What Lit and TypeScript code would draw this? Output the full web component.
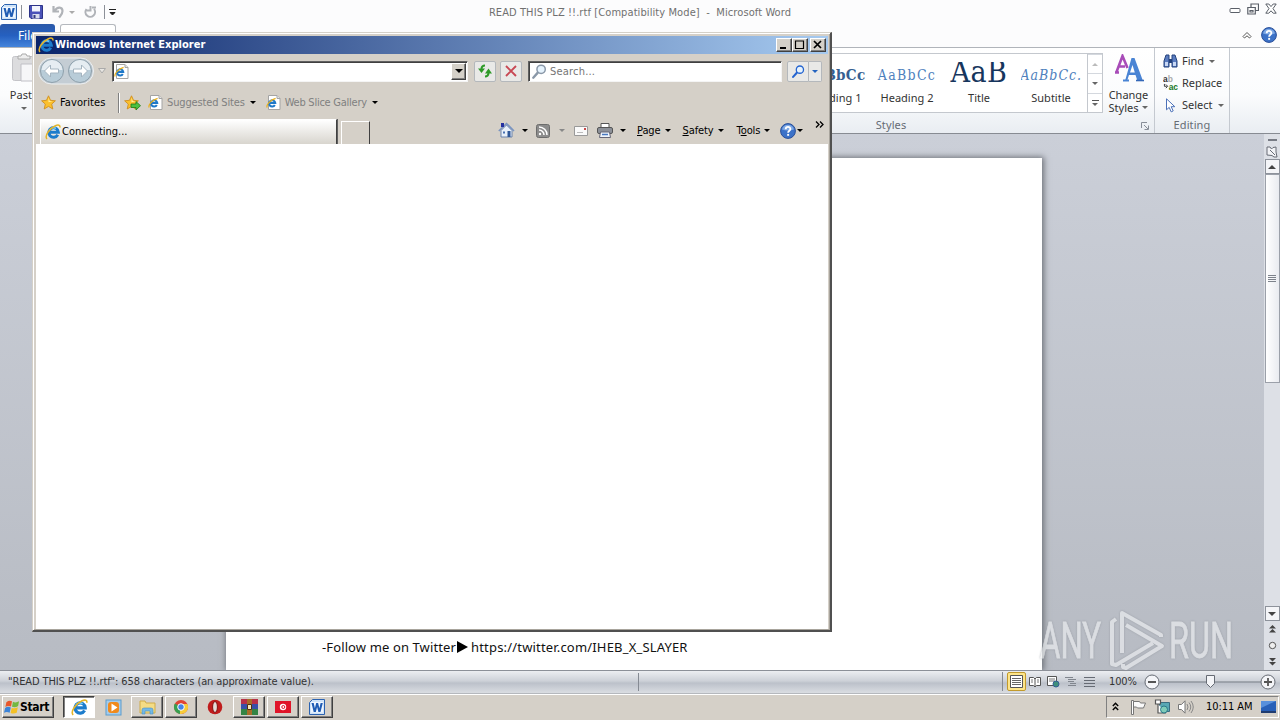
import { LitElement, html, svg, css } from 'lit';
import { customElement } from 'lit/decorators.js';

const ieGlyph = (size: number) => html`
  <svg width=${size} height=${size} viewBox="0 0 16 16">
    <path d="M12.8 10.800a4.800 4.800 0 1 1 .6-2.500H5.400" fill="none" stroke="#1c7ccc" stroke-width="3" />
    <path d="M4.600 6a4.600 4.600 0 0 1 6.400-1.600" fill="none" stroke="#7cd0f8" stroke-width="1.400" />
    <path d="M2 15C-.8 12 4.400 4.400 10.400 1.700c2.800-1.200 5-.6 4.400 1.800" fill="none" stroke="#e4b428" stroke-width="1.500" />
  </svg>`;

const pageGlyph = html`
  <svg width="15" height="15" viewBox="0 0 15 15">
    <path d="M2.5.5h8.500l3 3v11h-11.500z" fill="#fff" stroke="#a4a4a4" />
    <path d="M11 .5v3h3" fill="#e4e4e4" stroke="#a4a4a4" />
    <path d="M8.800 10a3.100 3.100 0 1 1 .4-2H4" fill="none" stroke="#1e78c8" stroke-width="2.100" />
    <path d="M1.200 12.500C0 10.400 3.600 5.200 9.600 3.400" fill="none" stroke="#e8b020" stroke-width="1.200" />
  </svg>`;

const starShape = svg`<path d="M7.500.800l2 4.500 4.900.5-3.700 3.300 1.100 4.900-4.300-2.600L3.200 14l1.100-4.900L.6 5.800l4.900-.5z" fill="#fbc02c" stroke="#d09020" stroke-width=".9"/><path d="M7.500 2.600l1.200 3.300 3 .4-4.200 1z" fill="#fff0a0"/>`;

const wordGlyph = (size: number) => html`
  <svg width=${size} height=${size} viewBox="0 0 16 16">
    <path d="M3.500.5h12v15h-15v-12z" fill="#cfe3f8" stroke="#2b62b0" />
    <rect x="2" y="3" width="12" height="10.500" fill="#f0f7ff" />
    <path d="M2.500 4h2.200l1.200 5.200L7.200 4h1.900l1.300 5.200L11.600 4h2.200l-2.300 9H9.400L8.100 8l-1.300 5H4.700z" fill="#1f5cb4" />
  </svg>`;

const lens = (color: string, size: number) => html`
  <svg width=${size} height=${size} viewBox="0 0 14 14">
    <path d="M1.200 12.800l4-4.500" stroke=${color} stroke-width="2.200" stroke-linecap="round" />
    <circle cx="8.500" cy="5" r="3.900" fill="#e6f3fd" stroke=${color} stroke-width="1.400" />
  </svg>`;

const helpGlyph = html`
  <svg width="16" height="16" viewBox="0 0 16 16">
    <circle cx="8" cy="8" r="7.400" fill="#3c72c8" stroke="#2a4f98" />
    <path d="M2 6.500a6.200 6.200 0 0 1 12 0q-6 2-12 0z" fill="#7ea8e4" />
    <path d="M5.700 6.200c0-3 4.700-3 4.700-.2 0 1.700-2.300 1.800-2.300 3.700" fill="none" stroke="#fff" stroke-width="1.800" />
    <rect x="7.200" y="10.900" width="1.900" height="1.900" fill="#fff" />
  </svg>`;

@customElement('word-window')
export class WordWindow extends LitElement {
  static styles = css`
    :host {
      display: flex;
      flex-direction: column;
      height: 694px;
      font: 11px/14px "Noto Sans", sans-serif;
      color: #333;
    }
    svg { display: block; flex: none; }
    .title-bar {
      display: grid;
      grid-template-columns: 240px 1fr 240px;
      height: 24px;
      align-items: center;
      background: #fcfcfd;
    }
    .quick { display: flex; align-items: center; padding-left: 1px; height: 22px; }
    .bar { width: 1px; height: 14px; background: #8c9098; }
    .bar.first { margin: 0 7px 0 4px; }
    .bar.last { margin: 0 4px 0 8px; }
    .undo { margin-left: 9px; }
    .undo-arrow { margin-left: 4px; }
    .quick .undo-arrow { border-top-color: #aaa; }
    .redo { margin-left: 8px; }
    .title {
      text-align: center;
      font-family: "DejaVu Sans Condensed", "DejaVu Sans", sans-serif;
      font-stretch: condensed;
      color: #707070;
      letter-spacing: .09px;
      padding-top: 1px;
    }
    .controls { display: flex; justify-content: flex-end; gap: 6px; padding: 0 3px 6px 0; }
    .tabs {
      display: flex;
      align-items: flex-start;
      height: 23px;
      background: #fcfcfd;
      border-bottom: 1px solid #b0b4ba;
    }
    .file {
      width: 55px;
      height: 23px;
      border-radius: 3px 3px 0 0;
      background: linear-gradient(#2a58a8, #2560c0 50%, #4585dc);
      color: #fff;
      text-align: center;
      line-height: 24px;
      font-size: 12px;
    }
    .home {
      width: 56px;
      height: 23px;
      margin-left: 5px;
      border: 1px solid #b4b8be;
      border-bottom: 0;
      border-radius: 3px 3px 0 0;
      background: #fff;
      box-sizing: border-box;
    }
    .tab-tools { display: flex; align-items: center; gap: 9px; margin: 3px 3px 0 auto; }
    .ribbon {
      display: flex;
      height: 85px;
      background: linear-gradient(#fff, #fbfcfd 55%, #e9edf2);
      border-bottom: 1px solid #878b92;
    }
    .clipboard { width: 48px; padding-top: 5px; display: flex; flex-direction: column; align-items: center; }
    .clipboard span { margin-top: 6px; font-size: 11px; }
    .clipboard .tri { margin-top: 5px; }
    .group {
      display: flex;
      flex-direction: column;
      box-sizing: border-box;
      border-right: 1px solid #c4c9d0;
    }
    .styles { width: 527px; margin-left: auto; margin-right: 0; }
    .editing { width: 75px; margin-right: 50px; }
    .group-body { display: flex; height: 70px; }
    .group-name {
      display: flex;
      justify-content: center;
      position: relative;
      color: #666c74;
      letter-spacing: .1px;
    }
    .launcher { position: absolute; right: 5px; top: 4px; }
    .gallery {
      display: flex;
      flex: 1;
      justify-content: flex-end;
      height: 58px;
      margin-top: 5px;
      border: 1px solid #c4c8ce;
      background: #fff;
      overflow: hidden;
    }
    .style { width: 72px; text-align: center; overflow: hidden; color: #333; }
    .sample {
      height: 29px;
      line-height: 26px;
      width: 61px;
      margin: 8px auto 0;
      overflow: hidden;
      white-space: nowrap;
      font-family: "DejaVu Serif Condensed", "DejaVu Serif", serif;
      font-stretch: condensed;
      font-size: 14px;
      letter-spacing: 1.300px;
      color: #4f81bd;
    }
    .sample.h1 { font-weight: bold; letter-spacing: .3px; font-size: 15px; color: #365f91; }
    .sample.title-style { font-size: 30px; line-height: 19px; color: #17365d; letter-spacing: .5px; }
    .sample.sub { font-style: italic; letter-spacing: 1px; }
    .scroller { width: 14px; border-left: 1px solid #c4c8ce; display: grid; grid-template-rows: 19px 20px 19px; }
    .scroller div { display: grid; place-content: center; justify-items: center; gap: 2px; border-top: 1px solid #d4d8de; }
    .rule { width: 7px; height: 1px; background: #555; }
    .tri { width: 0; height: 0; border: 3px solid transparent; border-top: 3px solid #666; border-bottom: 0; }
    .tri.up { border-top: 0; border-bottom: 3px solid #bbb; }
    .change { width: 51px; display: flex; flex-direction: column; align-items: center; padding-top: 6px; }
    .change span { display: flex; align-items: center; gap: 4px; line-height: 13px; }
    .change svg { margin-bottom: 6px; }
    .commands { display: flex; flex-direction: column; padding: 2px 0 0 8px; }
    .commands div { display: flex; align-items: center; height: 22px; gap: 4px; white-space: nowrap; }
    .commands .tri { margin-left: 1px; }
    .workspace {
      display: flex;
      flex: 1;
      min-height: 0;
      background: linear-gradient(#cbcfd8, #b7bbc3);
      overflow: hidden;
    }
    .page {
      width: 816px;
      margin: 24px 0 0 226px;
      background: #fff;
      box-shadow: 1px 0 6px 1px #6d7178;
      display: flex;
      align-items: flex-end;
      box-sizing: border-box;
      padding: 0 0 14px 96px;
    }
    .page p { margin: 0; display: flex; align-items: center; font-size: 13px; line-height: 18px; letter-spacing: .12px; color: #111; white-space: nowrap; }
    .page svg { margin: 0 3px 0 0; }
    .page .handle { letter-spacing: .18px; }
    .scroll {
      width: 16px;
      margin-left: auto;
      display: flex;
      flex-direction: column;
      align-items: center;
      background: #dde0e6;
    }
    .split { width: 9px; height: 2px; margin: 5px 0 5px; background: #777b84; }
    .sbtn { width: 13px; height: 13px; margin-top: 2px; border: 1px solid #8d929b; background: #f4f5f8; display: grid; place-content: center; }
    .sbtn .tri { border-width: 4px 4px 0; border-top-color: #444; }
    .sbtn .tri.up { border-width: 0 4px 4px; border-bottom-color: #444; }
    .scroll > .sbtn { margin-top: 1px; }
    .thumb {
      width: 13px;
      height: 207px;
      border: 1px solid #9ba0a9;
      background: linear-gradient(90deg, #fff, #e9ebf0);
      display: grid;
      place-content: center;
      gap: 1px;
    }
    .thumb i { width: 8px; height: 1px; background: #7d828b; }
    .browse { margin-top: auto; }
    .browse .sbtn { margin: 0 0 1px; }
    .browse > svg { margin: 0 auto; }
    .status {
      display: flex;
      align-items: center;
      height: 24px;
      box-sizing: border-box;
      border-top: 1px solid #8c9098;
      border-bottom: 1px solid #b5b8bd;
      background: linear-gradient(#eceef1, #cdd1d8 45%, #bcc1ca 55%, #dadde2);
      font-family: "DejaVu Sans Condensed", "DejaVu Sans", sans-serif;
      font-stretch: condensed;
      letter-spacing: -.11px;
      padding: 0 0 1px 8px;
    }
    .message { width: 630px; }
    .pane { width: 1px; height: 18px; background: #858a93; }
    .views { display: flex; align-items: center; margin-left: 363px; border-left: 1px solid #858a93; padding-left: 4px; }
    .view { padding: 2px; width: 14px; display: grid; place-content: center; }
    .view.on { padding: 2px 1px; width: 15px; border: 1px solid #c29a2c; border-radius: 2px; background: #fde58a; }
    .zoom { margin-left: 11px; width: 35px; }
  `;

  render() {
    return html`
      <div class="title-bar">
        <div class="quick">
          ${wordGlyph(16)}
          <div class="bar first"></div>
          <svg width="14" height="14" viewBox="0 0 14 14">
            <path d="M.5.500h13v13H2l-1.500-1.500z" fill="#4a52b8" stroke="#2c3388" />
            <path d="M3 1h8v5.500H3z" fill="#f2f4fc" /><path d="M3.500 9h7v4.500h-7z" fill="#d8dcec" /><path d="M4.500 10h2v3h-2z" fill="#333a80" />
          </svg>
          <svg class="undo" width="13" height="14" viewBox="0 0 13 14"><path d="M1.500 1v5.500H7M2.500 6c3-5 8-4 8 0 0 3-1.500 4-3.500 6.500" fill="none" stroke="#b0b3b8" stroke-width="2.200" /></svg>
          <div class="tri undo-arrow"></div>
          <svg class="redo" width="13" height="14" viewBox="0 0 13 14"><path d="M3.500 4a4.800 4.800 0 1 0 7.500 0M7.500 1v4.500H3.500M9 2.500h4" fill="none" stroke="#b0b3b8" stroke-width="2" /></svg>
          <div class="bar last"></div>
          <svg width="8" height="8" viewBox="0 0 8 8"><path d="M0 1.500h7M1 4.500h5L3.500 7z" stroke="#222" stroke-width="1" fill="#222" /></svg>
        </div>
        <div class="title">READ THIS PLZ !!.rtf [Compatibility Mode]&nbsp; - &nbsp;Microsoft Word</div>
        <div class="controls">
          <svg width="12" height="12" viewBox="0 0 12 12"><rect x="1" y="5.500" width="10" height="4" rx="1" fill="#fff" stroke="#5a5f68" /></svg>
          <svg width="12" height="12" viewBox="0 0 12 12"><path d="M4 4V1h7.500v6.500H8.500M.8 4.500h7.500v6.500H.8zM3 7.500h3v1.500H3z" fill="none" stroke="#5a5f68" stroke-width="1.200" /></svg>
          <svg width="12" height="12" viewBox="0 0 12 12"><path d="M.8 1h3L6 3.600 8.200 1h3L8 5.600l3.200 4.600h-3L6 7.800l-2.200 2.400h-3L4 5.600z" fill="#fff" stroke="#5a5f68" /></svg>
        </div>
      </div>
      <div class="tabs">
        <div class="file">File</div>
        <div class="home"></div>
        <div class="tab-tools">
          <svg width="10" height="8" viewBox="0 0 10 8"><path d="M1 5.500l4-4 4 4-1.500 1.500L5 4.800 2.500 7z" fill="#fff" stroke="#555" /></svg>
          ${helpGlyph}
        </div>
      </div>
      <div class="ribbon">
        <div class="clipboard">
          <svg width="24" height="29" viewBox="0 0 24 29">
            <rect x=".5" y="3.500" width="22" height="24" rx="2" fill="#dcdcde" stroke="#c4c4c8" />
            <path d="M6 6V3h3l1-2h4l1 2h3v3z" fill="#eee" stroke="#aaa" />
            <path d="M9 11h15v17H9z" fill="#f6f6f8" stroke="#c0c0c6" />
          </svg>
          <span>Paste</span>
          <div class="tri"></div>
        </div>
        <div class="group styles">
          <div class="group-body">
            <div class="gallery">
              <div class="style"><div class="sample h1">AaBbCc</div>Heading 1</div>
              <div class="style"><div class="sample">AaBbCc</div>Heading 2</div>
              <div class="style"><div class="sample title-style">AaB</div>Title</div>
              <div class="style"><div class="sample sub">AaBbCc.</div>Subtitle</div>
              <div class="scroller">
                <div><b class="tri up"></b></div>
                <div><b class="tri"></b></div>
                <div><b class="rule"></b><b class="tri"></b></div>
              </div>
            </div>
            <div class="change">
              <svg width="30" height="28" viewBox="0 0 30 28">
                <path d="M1 18.500h4M2.500 18L8.500 2l5 12M5 12.500h6" fill="none" stroke="#a84cb8" stroke-width="2.600" />
                <path d="M9 26.500h6" fill="none" stroke="#4a84d4" stroke-width="2" />
                <path d="M11 27L17.500 4h3L29 27h-5.500l-2-6h-6.500l-2 6zM16 18.500h4.800L18.500 11z" fill="#4a84d4" />
                <path d="M22 26.500h8" stroke="#3468b8" stroke-width="1.600" />
              </svg>
              <span>Change</span>
              <span>Styles <b class="tri"></b></span>
            </div>
          </div>
          <div class="group-name">Styles
            <svg class="launcher" width="8" height="8" viewBox="0 0 8 8"><path d="M.5 6V.500H6M3 3l4 4M7.500 3.500v4h-4" fill="none" stroke="#888e98" /></svg>
          </div>
        </div>
        <div class="group editing">
          <div class="group-body">
            <div class="commands">
              <div>
                <svg width="15" height="14" viewBox="0 0 15 14"><path d="M1 13V7l2-6h3v12zM9 13V1h3l2 6v6z" fill="#5a7cc0" stroke="#24427c" /><path d="M6 5h3v4H6z" fill="#24427c" /><path d="M2 8h3v4H2zM10 8h3v4h-3z" fill="#c8d8f4" /></svg>
                Find <b class="tri"></b>
              </div>
              <div>
                <svg width="15" height="16" viewBox="0 0 16 16">
                  <text x="0" y="7" font-family="Liberation Sans" font-weight="bold" font-size="9" fill="#333">a<tspan fill="#aaa">b</tspan></text>
                  <text x="6" y="15" font-family="Liberation Sans" font-weight="bold" font-size="9" fill="#187828">ac</text>
                  <path d="M1.500 9v2.500H4M3 9.500l2 2-2 2" fill="none" stroke="#333" />
                </svg>
                Replace
              </div>
              <div>
                <svg width="15" height="15" viewBox="0 0 15 15"><path d="M3.500.800v11l2.700-2.400 2 4.500 2-1-2-4.200h3.600z" fill="#fff" stroke="#4a70b8" /></svg>
                Select <b class="tri"></b>
              </div>
            </div>
          </div>
          <div class="group-name">Editing</div>
        </div>
      </div>
      <div class="workspace">
        <div class="page">
          <p>-Follow me on Twitter
            <svg width="12" height="12" viewBox="0 0 12 12"><path d="M1 0l11 6-11 6z" fill="#000" /></svg>
            <span class="handle">https://twitter.com/IHEB_X_SLAYER</span>
          </p>
        </div>
        <div class="scroll">
          <div class="split"></div>
          <svg width="12" height="12" viewBox="0 0 12 12"><path d="M1 1h3l1.500 2L7 1.500 10 1v5l1 5H8L6 9.500 1 9z" fill="#f2f3f6" stroke="#666b75" /><path d="M4 4l5 5" stroke="#666b75" /></svg>
          <div class="sbtn"><b class="tri up"></b></div>
          <div class="thumb"><i></i><i></i><i></i><i></i></div>
          <div class="browse">
            <div class="sbtn"><b class="tri"></b></div>
            <svg width="9" height="48" viewBox="0 0 9 48">
              <path d="M1 6.500L4.500 3 8 6.500zM1 10.500L4.500 7 8 10.500zM1 36h7L4.500 39.500zM1 40h7L4.500 43.500z" fill="#444" />
              <circle cx="4.500" cy="23.500" r="3.200" fill="#eee" stroke="#555" />
            </svg>
          </div>
        </div>
      </div>
      <div class="status">
        <div class="message">"READ THIS PLZ !!.rtf": 658 characters (an approximate value).</div>
        <div class="pane"></div>
        <div class="views">
          <div class="view on"><svg width="13" height="13" viewBox="0 0 13 13"><path d="M.5.500h12v12H.5z" fill="#fff" stroke="#555" /><path d="M2 3.500h9M2 5.500h9M2 7.500h9M2 9.500h9" stroke="#666" /></svg></div>
          <div class="view"><svg width="12" height="12" viewBox="0 0 12 12"><path d="M.5 1.500h4L6 3l1.500-1.500h4v8h-4L6 11 4.500 9.500h-4zM6 3v8" fill="#fff" stroke="#555" /><path d="M2 4h2M2 6h2M8 4h2M8 6h2" stroke="#777" /></svg></div>
          <div class="view"><svg width="13" height="12" viewBox="0 0 13 12"><path d="M.5.500h9v9h-9z" fill="#fff" stroke="#555" /><path d="M2 3h6M2 5h6" stroke="#777" /><circle cx="9" cy="8" r="3" fill="#3f8f7c" stroke="#345f94" /></svg></div>
          <div class="view"><svg width="12" height="12" viewBox="0 0 12 12"><path d="M0 1.500h8M3 3.500h8M3 5.500h6M5 7.500h6M3 9.500h8" stroke="#81868e" /></svg></div>
          <div class="view"><svg width="11" height="12" viewBox="0 0 11 12"><path d="M0 1.500h11M0 4.500h11M0 7.500h11M0 10.500h11" stroke="#666b74" /></svg></div>
        </div>
        <div class="zoom">100%</div>
        <svg width="133" height="18" viewBox="0 0 133 18">
          <path d="M16 9h102" stroke="#777c85" />
          <g fill="#f4f5f8" stroke="#666b74"><circle cx="8" cy="9" r="7" /><circle cx="124" cy="9" r="7" /><path d="M62.500 2.500h8v8l-4 4-4-4z" /></g>
          <path d="M4 9h8M120 9h8M124 5v8" stroke="#555" stroke-width="1.800" />
        </svg>
      </div>
    `;
  }
}

@customElement('ie-window')
export class IeWindow extends LitElement {
  static styles = css`
    :host {
      display: flex;
      flex-direction: column;
      box-sizing: border-box;
      width: 800px;
      height: 600px;
      padding: 3px 1px 1px 3px;
      border: 1px solid #d4d0c8;
      border-right: 2px solid #505050;
      border-bottom: 2px solid #505050;
      background: #d5d0c8;
      box-shadow: inset 1px 1px #fff, inset -1px -1px #a8a49c;
      font: 11px/14px "DejaVu Sans Condensed", "DejaVu Sans", sans-serif;
      font-stretch: condensed;
      letter-spacing: -.1px;
      color: #000;
    }
    svg { display: block; flex: none; }
    .caption {
      display: flex;
      align-items: center;
      height: 18px;
      margin-right: 1px;
      padding: 0 2px;
      background: linear-gradient(90deg, #0a246a, #a6caf0);
      color: #fff;
      font-weight: bold;
      letter-spacing: .03px;
    }
    .caption span { margin-left: 1px; flex: 1; }
    .cbtn {
      width: 14px;
      height: 12px;
      border: 1px solid;
      border-color: #fff #404040 #404040 #fff;
      box-shadow: inset -1px -1px #808080;
      background: #d4d0c8;
    }
    .cbtn:last-child { margin-left: 2px; }
    .nav { display: flex; align-items: center; height: 34px; padding: 0 7px 0 2px; }
    .menu-tri { margin-left: 4px; }
    .field {
      display: flex;
      align-items: center;
      box-sizing: border-box;
      height: 21px;
      border: 1px solid;
      border-color: #606060 #f4f4f4 #f4f4f4 #606060;
      box-shadow: inset 1px 1px #404040;
      background: #fff;
      color: #757575;
    }
    .address { width: 356px; margin-left: 6px; padding-left: 1px; }
    .combo {
      width: 13px;
      height: 15px;
      margin-left: auto;
      margin-right: 1px;
      border: 1px solid;
      border-color: #fff #404040 #404040 #fff;
      box-shadow: inset -1px -1px #808080;
      background: #d4d0c8;
      display: grid;
      place-content: center;
    }
    .tool {
      display: grid;
      place-content: center;
      width: 20px;
      height: 19px;
      border: 1px solid #b4b8bc;
      border-radius: 2px;
      background: #e9e9e7;
    }
    .refresh { margin: 0 4px 0 6px; }
    .search { width: 254px; margin-left: 6px; padding-left: 3px; gap: 3px; letter-spacing: .2px; }
    .search span { padding-top: 1px; }
    .go { display: flex; margin-left: 5px; }
    .go .tool:first-child { border-radius: 2px 0 0 2px; }
    .go .tool:last-child { width: 12px; border-left: 0; border-radius: 0 2px 2px 0; }
    .tri { width: 0; height: 0; border: 3px solid transparent; border-top: 3px solid #000; border-bottom: 0; }
    .combo .tri { border-width: 4px 4px 0; }
    .go .tri { border-top-color: #2464c0; }
    .tri.dim { border-top-color: #888; }
    .favorites { display: flex; align-items: center; height: 29px; padding-left: 5px; color: #808080; }
    .favorites .label { color: #000; margin-left: 4px; width: 58px; letter-spacing: .1px; }
    .rule { width: 1px; height: 20px; background: #808080; border-right: 1px solid #fff; margin-right: 4px; }
    .site { display: flex; align-items: center; margin-left: 7px; white-space: nowrap; }
    .site span { margin: 0 5px 0 4px; letter-spacing: -.15px; }
    .site + .site { margin-left: 10px; }
    .site + .site span { letter-spacing: -.25px; }
    .tab-row { display: flex; align-items: flex-end; height: 27px; padding-left: 4px; }
    .tab {
      display: flex;
      align-items: center;
      gap: 1px;
      width: 291px;
      height: 24px;
      padding-left: 4px;
      border: 1px solid;
      border-color: #fff #404040 transparent #fff;
      border-bottom: 0;
      box-shadow: 1px 0 #606060;
      background: linear-gradient(#fff, #d8d5ce);
      letter-spacing: -.02px;
    }
    .new-tab { width: 27px; height: 22px; margin-left: 4px; border: 1px solid; border-color: #fff #404040 transparent #fff; border-bottom: 0; }
    .commands { display: flex; align-items: center; height: 27px; margin-left: 128px; }
    .commands .tri { margin: 0 0 0 4px; }
    .home { margin-right: 3px; }
    .feed { margin-left: 8px; }
    .commands .feed + .tri { margin-left: 9px; }
    .mail { margin: 0 9px; }
    .print + .tri { margin-left: 7px; }
    .menu { margin-left: 11px; }
    .menu u { text-decoration-thickness: 1px; text-underline-offset: 1px; }
    .menu.safety { margin-left: 12px; }
    .menu.tools { margin-left: 13px; }
    .help { margin-left: 10px; }
    .commands .help + .tri { margin-left: 1px; }
    .more { margin-left: 12px; margin-bottom: 12px; }
    .content { flex: 1; margin-right: 1px; background: #fff; }
  `;

  render() {
    const house = html`<svg class="home" width="17" height="17" viewBox="0 0 17 17">
      <path d="M3 8.500V15h11V8.500L8.500 3z" fill="#e8f0fa" stroke="#6a82aa" />
      <path d="M.800 9L8.500 1.500 16 9" fill="none" stroke="#7a94c0" stroke-width="1.600" />
      <path d="M3 1h3v4H3z" fill="#2430a0" /><path d="M9.500 9h3v6h-3z" fill="#305898" /><path d="M5 9.500h2v2H5z" fill="#4870b0" />
    </svg>`;
    return html`
      <div class="caption">
        ${ieGlyph(16)}<span>Windows Internet Explorer</span>
        <div class="cbtn"><svg width="14" height="12"><path d="M3 9h6" stroke="#000" stroke-width="2" /></svg></div>
        <div class="cbtn"><svg width="14" height="12"><path d="M2.500 2h8v7.500h-8zM2 2h9" fill="none" stroke="#000" stroke-width="1.200" /></svg></div>
        <div class="cbtn"><svg width="14" height="12"><path d="M3 2l7 7M10 2L3 9" stroke="#000" stroke-width="1.700" /></svg></div>
      </div>
      <div class="nav">
        <svg width="56" height="28" viewBox="0 0 56 28">
          <rect x=".5" y="1" width="55" height="26" rx="13" fill="#c4cdd4" stroke="#eceff1" />
          <g fill="#b8ccd8" stroke="#8fa0ab"><circle cx="14" cy="14" r="11.500" /><circle cx="42" cy="14" r="11.500" /></g>
          <path d="M3.500 13a10.500 10 0 0 1 21 0zM31.500 13a10.500 10 0 0 1 21 0z" fill="#e6edf2" />
          <path d="M6.500 14l6-6v4h8v4h-8v4zM49.500 14l-6-6v4h-8v4h8v4z" fill="#fff" stroke="#a4b4c0" />
        </svg>
        <svg class="menu-tri" width="8" height="6" viewBox="0 0 8 6"><path d="M.500.500h7L4 5z" fill="#e8e6e2" stroke="#aaa" /></svg>
        <div class="field address">${pageGlyph}<div class="combo"><b class="tri"></b></div></div>
        <div class="tool refresh"><svg width="14" height="14" viewBox="0 0 14 14"><path d="M7 1.500Q3.500 1.500 3.500 5M7 12.500q3.500 0 3.500-4" fill="none" stroke="#2e9a28" stroke-width="2" /><path d="M0 4.500h7L3.500 9zM7 9.500h7L10.500 4.500z" fill="#2e9a28" /></svg></div>
        <div class="tool"><svg width="12" height="12" viewBox="0 0 12 12"><path d="M1 1l10 10M11 1L1 11" stroke="#c84854" stroke-width="1.900" /></svg></div>
        <div class="field search">${lens('#8a98a8', 15)}<span>Search...</span></div>
        <div class="go"><div class="tool">${lens('#2464d0', 13)}</div><div class="tool"><b class="tri"></b></div></div>
      </div>
      <div class="favorites">
        <svg width="15" height="15" viewBox="0 0 15 15">${starShape}</svg>
        <span class="label">Favorites</span>
        <div class="rule"></div>
        <svg width="17" height="16" viewBox="0 0 17 16">${starShape}<path d="M7 9h5V6.500l4.500 4.200L12 15v-2.500H7z" fill="#4cc040" stroke="#1c7c18" stroke-width=".8" /></svg>
        <div class="site">${pageGlyph}<span>Suggested Sites</span><b class="tri"></b></div>
        <div class="site">${pageGlyph}<span>Web Slice Gallery</span><b class="tri"></b></div>
      </div>
      <div class="tab-row">
        <div class="tab">${ieGlyph(16)}Connecting...</div>
        <div class="new-tab"></div>
        <div class="commands">
          ${house}<b class="tri"></b>
          <svg class="feed" width="14" height="14" viewBox="0 0 14 14"><rect x=".5" y=".5" width="13" height="13" rx="2" fill="#8c8c8c" stroke="#6c6c6c" /><path d="M3 6a5 5 0 0 1 5 5M3 3a8 8 0 0 1 8 8" fill="none" stroke="#fff" stroke-width="1.500" /><circle cx="4" cy="10" r="1.200" fill="#fff" /></svg>
          <b class="tri dim"></b>
          <svg class="mail" width="14" height="10" viewBox="0 0 14 10"><path d="M.500.500h13v9H.5z" fill="#fafafa" stroke="#999" /><path d="M10 2h2v2h-2z" fill="#c84848" /><path d="M3 6.500h6" stroke="#bbb" /></svg>
          <svg class="print" width="16" height="15" viewBox="0 0 16 15"><path d="M4 5V.500h8V5" fill="#fff" stroke="#555" /><rect x=".5" y="4.500" width="15" height="6" rx="1.500" fill="#8c9098" stroke="#555" /><path d="M3.500 9h9l1 5.500h-11z" fill="#eef4fc" stroke="#667" /><path d="M5 11.500h6" stroke="#4878c0" stroke-width="1.500" /></svg>
          <b class="tri"></b>
          <span class="menu"><u>P</u>age</span><b class="tri"></b>
          <span class="menu safety"><u>S</u>afety</span><b class="tri"></b>
          <span class="menu tools">T<u>o</u>ols</span><b class="tri"></b>
          <span class="help">${helpGlyph}</span><b class="tri"></b>
          <svg class="more" width="9" height="7" viewBox="0 0 9 7"><path d="M1 .500l3 3-3 3M5 .500l3 3-3 3" fill="none" stroke="#000" stroke-width="1.300" /></svg>
        </div>
      </div>
      <div class="content"></div>
    `;
  }
}

@customElement('task-bar')
export class TaskBar extends LitElement {
  static styles = css`
    :host {
      display: flex;
      align-items: flex-start;
      height: 26px;
      box-sizing: border-box;
      padding: 1px 0 0 2px;
      border-top: 1px solid #fff;
      background: #d5d0c8;
      font: 11px/14px "DejaVu Sans Condensed", "DejaVu Sans", sans-serif;
      font-stretch: condensed;
    }
    svg { display: block; flex: none; }
    .start, .task {
      box-sizing: border-box;
      height: 22px;
      border: 1px solid;
      border-color: #fff #404040 #404040 #fff;
      box-shadow: inset -1px -1px #808080;
    }
    .start { display: flex; align-items: center; width: 52px; padding-left: 1px; font-weight: bold; font-size: 12px; letter-spacing: -.3px; margin-right: 9px; }
    .tasks { display: grid; grid-auto-flow: column; grid-auto-columns: 32px; gap: 2px; }
    .task { display: grid; place-content: center; }
    .task.flat { border-color: transparent; box-shadow: none; }
    .task.active { background: #fff; border-color: #404040 #fff #fff #404040; box-shadow: inset 1px 1px #808080; }
    .tray {
      display: flex;
      align-items: center;
      box-sizing: border-box;
      width: 173px;
      height: 22px;
      margin: 0 1px 0 auto;
      padding-left: 6px;
      border: 1px solid;
      border-color: #808080 #fff #fff #808080;
    }
    .tray > :first-child { margin-bottom: 2px; margin-left: -1px; }
    .flag { margin-left: 11px; }
    .net { margin-left: 8px; }
    .sound { margin-left: 8px; }
    .clock { margin-left: 12px; width: 55px; letter-spacing: -.05px; white-space: nowrap; }
  `;

  render() {
    return html`
      <div class="start">
        <svg width="16" height="16" viewBox="0 0 17 16">
          <path d="M2.500 3Q5.500.500 8.500 2L7.500 7.500Q4 6 1.500 8z" fill="#e8582c" /><path d="M9.500 2.500q3 1.500 6.500-.500L15 7q-3 2-6.500.800z" fill="#74b840" />
          <path d="M1.200 9Q4 7 7.200 8.500L6 14q-3-1.500-6 0z" fill="#3c84d8" /><path d="M8.200 9q3.500 1 6.500-.800L13.500 14q-3 1.500-6.500.300z" fill="#f4c024" />
        </svg>Start
      </div>
      <div class="tasks">
        <div class="task active">${ieGlyph(17)}</div>
        <div class="task flat"><svg width="17" height="17" viewBox="0 0 17 17"><rect x="1" y="1" width="15" height="15" fill="#a4ccec" stroke="#5c9ccc" /><rect x="3" y="3" width="11" height="11" rx="3" fill="#f08a1c" /><path d="M6.500 4.500l6 4-6 4z" fill="#fff" /></svg></div>
        <div class="task"><svg width="17" height="16" viewBox="0 0 17 16"><path d="M1 2h5l1 2h9v10H1z" fill="#f4dc84" stroke="#d0ac48" /><path d="M3 15v-4q0-2 2-2h7q2 0 2 2v4h-3v-3H6v3z" fill="#74b8e4" stroke="#4890c4" stroke-width=".6" /></svg></div>
        <div class="task"><svg width="16" height="16" viewBox="0 0 16 16"><circle cx="8" cy="8" r="7" fill="#e04434" /><path d="M8 8L1.900 4.500A7 7 0 0 0 7 15z" fill="#38a050" /><path d="M8 8h-1v7A7 7 0 0 0 14.300 5H8z" fill="#f8cc38" /><circle cx="8" cy="8" r="3.300" fill="#4484e8" stroke="#fff" /></svg></div>
        <div class="task flat"><svg width="16" height="16" viewBox="0 0 16 16"><circle cx="8" cy="8" r="7.300" fill="#c01c1c" /><ellipse cx="8" cy="8" rx="2.400" ry="5.500" fill="#e4dcd8" stroke="#801010" /></svg></div>
        <div class="task"><svg width="17" height="16" viewBox="0 0 17 16"><path d="M0 0h17v5H0z" fill="#b83048" /><path d="M0 5h17v5H0z" fill="#3850a8" /><path d="M0 10h17v6H0z" fill="#348444" /><path d="M6 0h5v16H6z" fill="#a86c28" /><path d="M6.500 5.500h4v5h-4z" fill="#f4e8b8" stroke="#503010" /></svg></div>
        <div class="task"><svg width="16" height="12" viewBox="0 0 16 12"><path d="M0 0h16v12H0z" fill="#e01428" /><circle cx="8" cy="6" r="3.200" fill="#fff" /><circle cx="8.300" cy="6" r="1.500" fill="none" stroke="#e01428" /></svg></div>
        <div class="task">${wordGlyph(16)}</div>
      </div>
      <div class="tray">
        <svg width="7" height="9" viewBox="0 0 7 9"><path d="M.800 4l2.700-2.700L6.200 4M.800 8l2.700-2.700L6.200 8" fill="none" stroke="#000" stroke-width="1.400" /></svg>
        <svg class="flag" width="16" height="15" viewBox="0 0 16 15"><path d="M1.500.500v14h2V.500z" fill="#fff" stroke="#777" /><path d="M3.500 1.500h6l1 1.500h5l-2 5h-6l-1-1h-3z" fill="#fafafa" stroke="#777" /></svg>
        <svg class="net" width="16" height="16" viewBox="0 0 16 16"><path d="M5.500 3.500h10v9h-10z" fill="#58a8b4" stroke="#3a6c80" /><path d="M1.500 1v4h5V1zM4 5v9h8" fill="#fff" stroke="#555" stroke-width="1.200" /><circle cx="10" cy="10.500" r="3.500" fill="#80ccb8" stroke="#287888" /></svg>
        <svg class="sound" width="16" height="14" viewBox="0 0 16 14"><path d="M.500 4.500h3L7 .800v12.400L3.500 9.500h-3z" fill="#fff" stroke="#777" /><path d="M9 4q2 3 0 6M11 2.500q3.500 4.500 0 9M13 1q4.500 6 0 12" fill="none" stroke="#888" /></svg>
        <span class="clock">10:11 AM</span>
        <svg width="15" height="12" viewBox="0 0 15 12"><path d="M0 0h15v10H0z" fill="#2860b8" /><path d="M0 0h15L0 7z" fill="#5890dc" /><path d="M0 11h15" stroke="#203c70" stroke-width="2" /></svg>
      </div>
    `;
  }
}

@customElement('app-root')
export class AppRoot extends LitElement {
  static styles = css`
    :host {
      display: block;
      position: relative;
      width: 1280px;
      height: 720px;
      overflow: hidden;
    }
    ie-window { position: absolute; left: 32px; top: 32px; }
    .watermark {
      position: absolute;
      left: 1036px;
      top: 606px;
      opacity: .65;
      overflow: visible;
      filter: drop-shadow(0 0 1px #8c9098);
    }
  `;

  render() {
    return html`
      <word-window></word-window>
      <task-bar></task-bar>
      <ie-window></ie-window>
      <svg class="watermark" width="210" height="68" viewBox="0 0 210 68">
        <g fill="#eef0f2" stroke="#eef0f2" stroke-width=".8" font-family="Roboto, sans-serif" font-size="50">
          <text x="4" y="52" textLength="61" lengthAdjust="spacingAndGlyphs">ANY</text>
          <text x="133" y="52" textLength="64" lengthAdjust="spacingAndGlyphs">RUN</text>
        </g>
        <g fill="none" stroke="#eef0f2" stroke-width="4" stroke-linejoin="round">
          <path d="M86 47V7l39 22v2" />
          <path d="M90 19l36 21-36 22-3-1v-3" />
          <path d="M80 13l-4 3v42l4 1 37-22" />
        </g>
      </svg>
    `;
  }
}
